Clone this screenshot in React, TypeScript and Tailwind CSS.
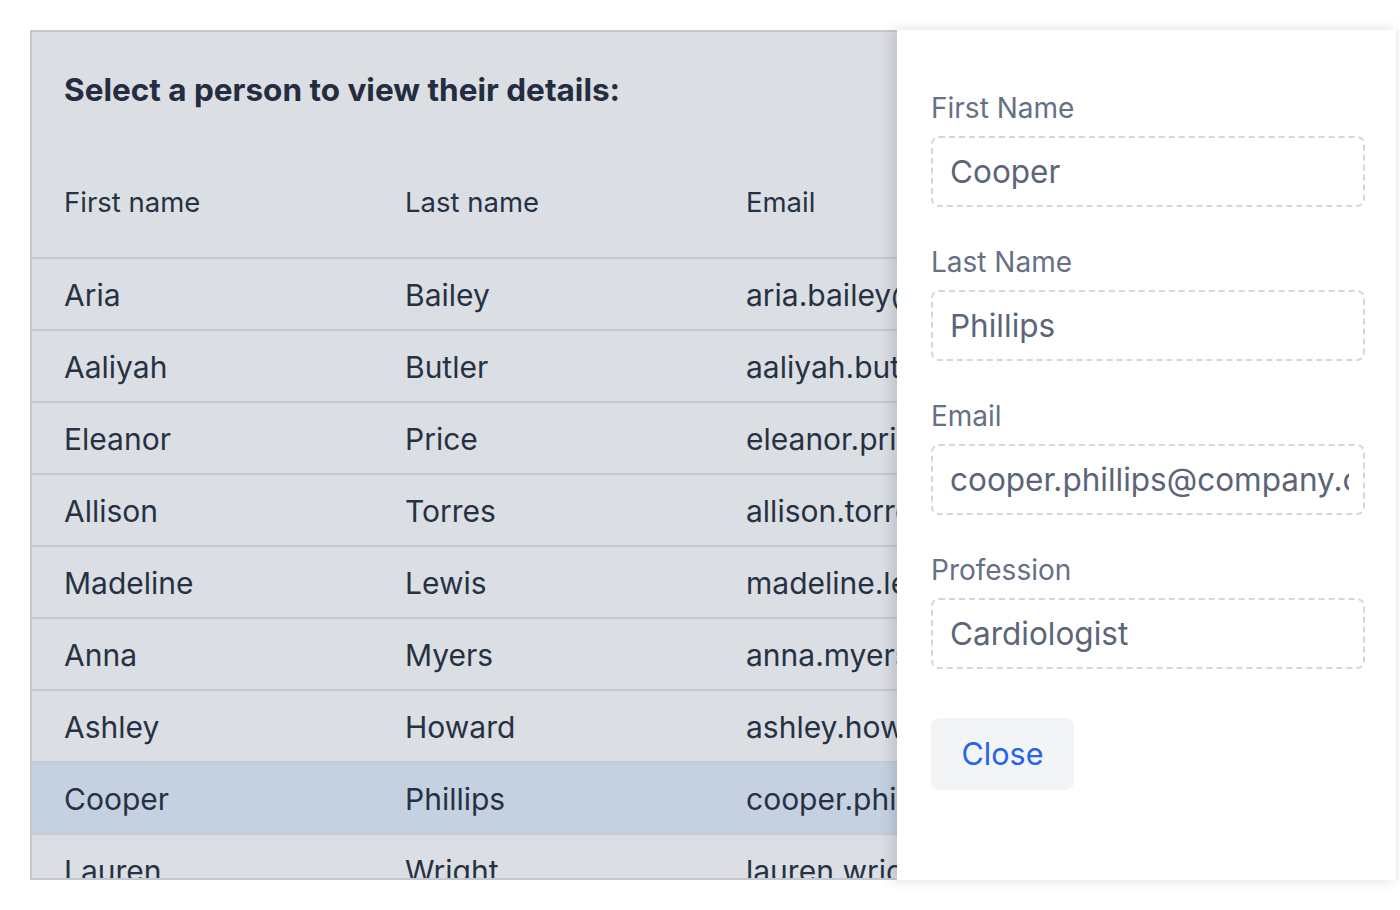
import React from "react";

const people = [
  { first: "Aria", last: "Bailey", email: "aria.bailey@company.com" },
  { first: "Aaliyah", last: "Butler", email: "aaliyah.butler@company.com" },
  { first: "Eleanor", last: "Price", email: "eleanor.price@company.com" },
  { first: "Allison", last: "Torres", email: "allison.torres@company.com" },
  { first: "Madeline", last: "Lewis", email: "madeline.lewis@company.com" },
  { first: "Anna", last: "Myers", email: "anna.myers@company.com" },
  { first: "Ashley", last: "Howard", email: "ashley.howard@company.com" },
  { first: "Cooper", last: "Phillips", email: "cooper.phillips@company.com" },
  { first: "Lauren", last: "Wright", email: "lauren.wright@company.com" },
];

const selected = "Cooper";

function Field({ label, value }: { label: string; value: string }) {
  return (
    <div className="flex flex-col">
      <label className="h-[36px] flex items-center text-[28px] text-[#667085]">{label}</label>
      <div className="mt-[10px] h-[71px] rounded-[8px] border-2 border-dashed border-[#d4d7dd] flex items-center pl-[17px] pr-[14px] overflow-hidden">
        <input
          readOnly
          value={value}
          className="w-full bg-transparent outline-none text-[31.5px] text-[#5b6577]"
          style={{ fontFamily: "Inter, 'Noto Sans', sans-serif" }}
        />
      </div>
    </div>
  );
}

export default function App() {
  return (
    <div className="w-[1400px] h-[910px] bg-white pt-[30px] pl-[30px]" style={{ fontFamily: "Inter, 'Noto Sans', sans-serif" }}>
      <div className="flex h-[850px] w-[1368px]">
        {/* TABLE */}
        <div className="w-[867px] h-full overflow-hidden border-2 border-r-0 border-[#c3c8d0] bg-[#dbdee3] text-[#263244]">
          <h1 className="pt-[40px] pl-[32px] h-[112px] text-[31.5px] leading-[36px] font-bold text-[#232d3f] whitespace-nowrap">
            Select a person to view their details:
          </h1>
          <div className="flex h-[115px] pt-[5px] items-center border-b-2 border-[#c5cad3] text-[27.5px] whitespace-nowrap">
            <div className="w-[341px] pl-[32px]">First name</div>
            <div className="w-[341px] pl-[32px]">Last name</div>
            <div className="flex-1 pl-[32px]">Email</div>
          </div>
          {people.map((p) => (
            <div
              key={p.first}
              className={`flex h-[72px] pt-[2px] items-center border-b-2 border-[#c5cad3] text-[30px] whitespace-nowrap ${
                p.first === selected ? "bg-[#c5d1e0] border-[#b8c3d3]" : ""
              }`}
            >
              <div className="w-[341px] pl-[32px]">{p.first}</div>
              <div className="w-[341px] pl-[32px]">{p.last}</div>
              <div className="flex-1 pl-[32px] overflow-hidden">{p.email}</div>
            </div>
          ))}
        </div>

        {/* DETAILS PANEL */}
        <div className="relative z-10 w-[501px] h-full bg-white border-r-2 border-[#f1f2f4] shadow-[-5px_0_12px_rgba(30,41,59,0.16)] pl-[34px] pr-[31px] pt-[60px]">
          <div className="flex flex-col gap-[37px]">
            <Field label="First Name" value="Cooper" />
            <Field label="Last Name" value="Phillips" />
            <Field label="Email" value="cooper.phillips@company.com" />
            <Field label="Profession" value="Cardiologist" />
          </div>
          <button className="mt-[49px] w-[143px] h-[72px] rounded-[8px] bg-[#f3f4f6] text-[30.5px] text-[#2563eb]">
            Close
          </button>
        </div>
      </div>
    </div>
  );
}
